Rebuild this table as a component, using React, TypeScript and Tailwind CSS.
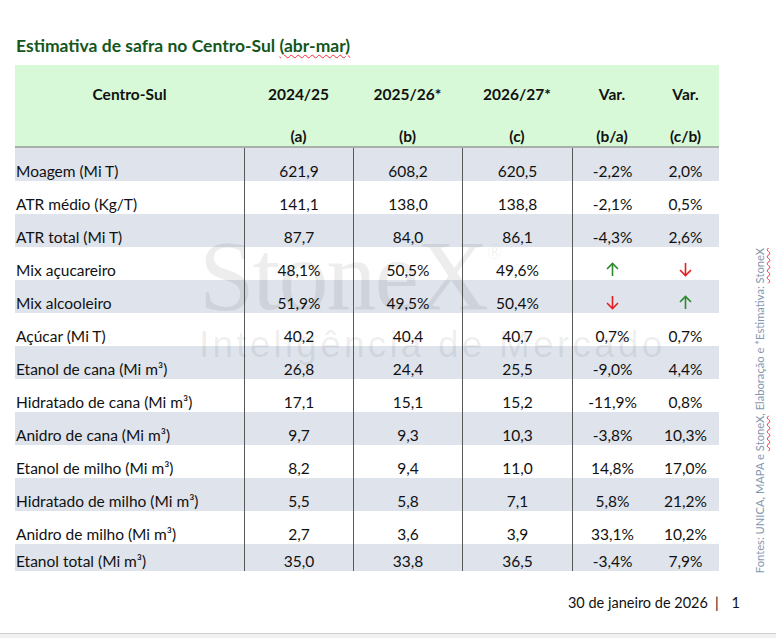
import React from "react";

type Row = {
  label: string;
  a: string;
  b: string;
  c: string;
  ba: string | "up" | "down";
  cb: string | "up" | "down";
};

const ROWS: Row[] = [
  { label: "Moagem (Mi T)", a: "621,9", b: "608,2", c: "620,5", ba: "-2,2%", cb: "2,0%" },
  { label: "ATR médio (Kg/T)", a: "141,1", b: "138,0", c: "138,8", ba: "-2,1%", cb: "0,5%" },
  { label: "ATR total (Mi T)", a: "87,7", b: "84,0", c: "86,1", ba: "-4,3%", cb: "2,6%" },
  { label: "Mix açucareiro", a: "48,1%", b: "50,5%", c: "49,6%", ba: "up", cb: "down" },
  { label: "Mix alcooleiro", a: "51,9%", b: "49,5%", c: "50,4%", ba: "down", cb: "up" },
  { label: "Açúcar (Mi T)", a: "40,2", b: "40,4", c: "40,7", ba: "0,7%", cb: "0,7%" },
  { label: "Etanol de cana (Mi m³)", a: "26,8", b: "24,4", c: "25,5", ba: "-9,0%", cb: "4,4%" },
  { label: "Hidratado de cana (Mi m³)", a: "17,1", b: "15,1", c: "15,2", ba: "-11,9%", cb: "0,8%" },
  { label: "Anidro de cana (Mi m³)", a: "9,7", b: "9,3", c: "10,3", ba: "-3,8%", cb: "10,3%" },
  { label: "Etanol de milho (Mi m³)", a: "8,2", b: "9,4", c: "11,0", ba: "14,8%", cb: "17,0%" },
  { label: "Hidratado de milho (Mi m³)", a: "5,5", b: "5,8", c: "7,1", ba: "5,8%", cb: "21,2%" },
  { label: "Anidro de milho (Mi m³)", a: "2,7", b: "3,6", c: "3,9", ba: "33,1%", cb: "10,2%" },
  { label: "Etanol total (Mi m³)", a: "35,0", b: "33,8", c: "36,5", ba: "-3,4%", cb: "7,9%" },
];

function Arrow({ dir }: { dir: "up" | "down" }) {
  const color = dir === "up" ? "#2b8a2b" : "#e02020";
  return (
    <svg width="13" height="15" viewBox="0 0 13 15" fill="none" className="mb-[3px]">
      {dir === "up" ? (
        <>
          <path d="M6.5 14V1.5" stroke={color} strokeWidth="1.6" />
          <path d="M1 7L6.5 1.5L12 7" stroke={color} strokeWidth="1.6" />
        </>
      ) : (
        <>
          <path d="M6.5 1V13.5" stroke={color} strokeWidth="1.6" />
          <path d="M1 8L6.5 13.5L12 8" stroke={color} strokeWidth="1.6" />
        </>
      )}
    </svg>
  );
}

const GRID = "grid grid-cols-[229px_109px_109px_110px_80px_67px]";

function Var({ v }: { v: string }) {
  if (v === "up" || v === "down") return <Arrow dir={v} />;
  return <span>{v}</span>;
}

export default function App() {
  return (
    <div className="relative flex h-[638px] w-[776px] flex-col overflow-hidden bg-white font-['Lato',sans-serif] text-[#111]">
      <div className="flex flex-1">
        <div className="flex w-[740px] shrink-0 flex-col pl-[15px]">
          {/* title */}
          <h1 className="mt-[35px] pl-px text-[17.5px] font-bold leading-[22px] text-[#14561c]">
            Estimativa de safra no Centro-Sul{" "}
            <span className="underline decoration-red-500 decoration-wavy decoration-1 underline-offset-2">
              (abr-mar)
            </span>
          </h1>

          <div className="mt-[8px] w-[704px] text-[15.5px]">
            {/* header */}
            <div className={`${GRID} h-[83px] border-b-2 border-[#a9b0a9] bg-[#d7f9d7] font-bold`}>
              {[
                ["Centro-Sul", ""],
                ["2024/25", "(a)"],
                ["2025/26*", "(b)"],
                ["2026/27*", "(c)"],
                ["Var.", "(b/a)"],
                ["Var.", "(c/b)"],
              ].map(([t, s], i) => (
                <div key={i} className="flex flex-col items-center pt-[19px] leading-[20px]">
                  <span>{t}</span>
                  <span className="mt-[22px]">{s}</span>
                </div>
              ))}
            </div>

            {/* body */}
            {ROWS.map((r, i) => (
              <div
                key={i}
                className={`${GRID} ${i === ROWS.length - 1 ? "h-[27px]" : "h-[33px]"} ${
                  i % 2 === 0 ? "bg-[#dee3ec]" : "bg-white"
                } leading-[20px]`}
              >
                <div className="flex items-end pl-px">
                  <span>{r.label}</span>
                </div>
                <div className="flex items-end justify-center border-l border-[#595959]">{r.a}</div>
                <div className="flex items-end justify-center border-l border-[#595959]">{r.b}</div>
                <div className="flex items-end justify-center border-l border-[#595959]">{r.c}</div>
                <div className="flex items-end justify-center border-l border-[#595959]">
                  <Var v={r.ba} />
                </div>
                <div className="flex items-end justify-center">
                  <Var v={r.cb} />
                </div>
              </div>
            ))}
          </div>

          {/* footer */}
          <div className="mt-[22px] flex justify-end text-[14.5px] leading-[20px] text-[#111]">
            <span>30 de janeiro de 2026</span>
            <span className="ml-[7px]">|</span>
            <span className="ml-[13px]">1</span>
          </div>
        </div>

        {/* source note */}
        <div className="ml-[13px] flex items-end pb-[60px]">
          <div className="rotate-180 whitespace-nowrap text-[11.2px] leading-[13px] text-[#8497b0] [writing-mode:vertical-rl]">
            Fontes: UNICA, MAPA e{" "}
            <span className="underline decoration-red-500 decoration-wavy decoration-1">StoneX</span>, Elaboração e
            *Estimativa:{" "}
            <span className="underline decoration-red-500 decoration-wavy decoration-1">StoneX</span>
          </div>
        </div>
      </div>

      <div className="h-[5px] border-t border-[#cfcfcf] bg-[#f1f1f1]" />

      {/* watermark */}
      <div className="pointer-events-none absolute left-[199px] top-[226px] flex flex-col text-black/[0.07]">
        <div className="flex items-start font-['Liberation_Serif',serif] text-[100px] leading-[100px] tracking-[-2px]">
          StoneX
          <span className="mt-[16px] text-[20px] leading-none tracking-normal">®</span>
        </div>
        <div className="-mt-[1px] font-['Liberation_Sans',sans-serif] text-[37px] font-light leading-[40px] tracking-[3.2px]">
          Inteligência de Mercado
        </div>
      </div>
    </div>
  );
}
